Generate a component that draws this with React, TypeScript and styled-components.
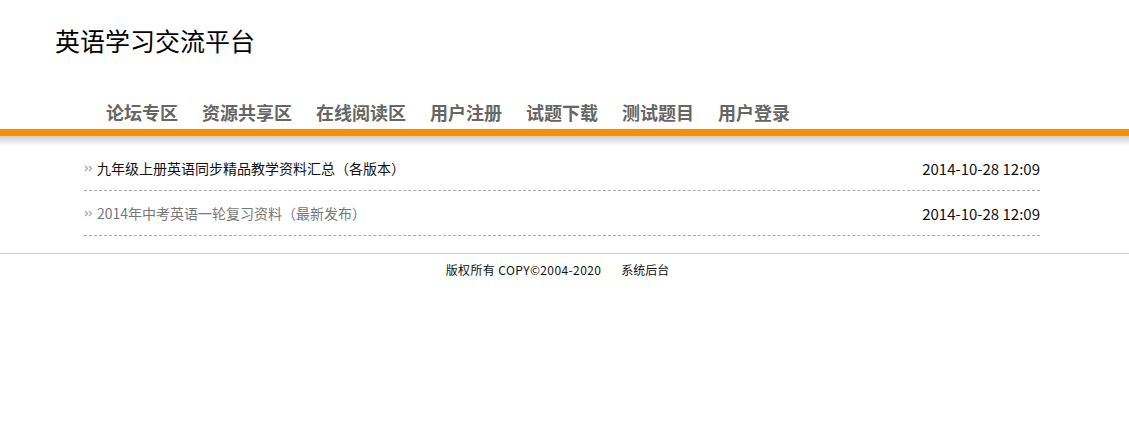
import * as React from 'react';
import styled, { createGlobalStyle } from 'styled-components';

const GlobalStyle = createGlobalStyle`
    html, body {
        margin: 0;
        padding: 0;
        background: #fff;
        font-family: "Noto Sans CJK SC", "Liberation Sans", sans-serif;
    }
`;

const Header = styled.header`
    display: flex;
    flex-direction: column;
`;

const Title = styled.h1`
    margin: 0;
    padding: 26px 0 0 55px;
    height: 95px;
    box-sizing: border-box;
    font-size: 25px;
    line-height: 28px;
    font-weight: normal;
    color: #000;
`;

const Nav = styled.nav`
    display: flex;
    padding: 0 0 0 94px;
    height: 34px;
    align-items: center;
`;

const NavItem = styled.a`
    padding: 0 12px;
    font-size: 18px;
    line-height: 24px;
    font-weight: bold;
    color: #666;
    text-decoration: none;
    cursor: pointer;
`;

const OrangeBar = styled.div`
    height: 7px;
    background: #ff8d00;
`;

const Shade = styled.div`
    height: 10px;
    background: linear-gradient(#cfcfcf, #fff);
`;

const List = styled.ul`
    list-style: none;
    margin: 0 0 0 84px;
    padding: 0;
    width: 956px;
`;

const Row = styled.li`
    display: flex;
    align-items: center;
    justify-content: space-between;
    height: 45px;
    box-sizing: border-box;
    border-bottom: 1px dashed #aaa;
    font-size: 14px;
`;

const Link = styled.a<{ $visited?: boolean }>`
    display: flex;
    align-items: center;
    gap: 4px;
    color: ${(p) => (p.$visited ? '#777' : '#111')};
    text-decoration: none;
    cursor: pointer;
`;

const Date = styled.span`
    font-size: 15px;
    color: #111;
`;

const Footer = styled.footer`
    margin-top: 17px;
    border-top: 1px solid #ccc;
    display: flex;
    justify-content: center;
    gap: 20px;
    padding-top: 7px;
    padding-right: 14px;
    font-size: 12px;
    line-height: 18px;
    color: #111;
`;

const Copy = styled.span`
    letter-spacing: 0.4px;
`;

function Chevrons(): React.ReactElement {
    return (
        <svg width="9" height="7" viewBox="0 0 9 7">
            <path d="M1 1l2.5 2.5L1 6M5 1l2.5 2.5L5 6" fill="none" stroke="#a7a7cc" strokeWidth="1.4" />
        </svg>
    );
}

const navItems = ['论坛专区', '资源共享区', '在线阅读区', '用户注册', '试题下载', '测试题目', '用户登录'];

const articles = [
    { title: '九年级上册英语同步精品教学资料汇总（各版本）', date: '2014-10-28 12:09', visited: false },
    { title: '2014年中考英语一轮复习资料（最新发布）', date: '2014-10-28 12:09', visited: true },
];

export default function App(): React.ReactElement {
    return (
        <>
            <GlobalStyle />
            <Header>
                <Title>英语学习交流平台</Title>
                <Nav>
                    {navItems.map((n) => (
                        <NavItem key={n}>{n}</NavItem>
                    ))}
                </Nav>
                <OrangeBar />
                <Shade />
            </Header>
            <List>
                {articles.map((a) => (
                    <Row key={a.title}>
                        <Link $visited={a.visited}>
                            <Chevrons />
                            {a.title}
                        </Link>
                        <Date>{a.date}</Date>
                    </Row>
                ))}
            </List>
            <Footer>
                <Copy>版权所有 COPY©2004-2020</Copy>
                <span>系统后台</span>
            </Footer>
        </>
    );
}
